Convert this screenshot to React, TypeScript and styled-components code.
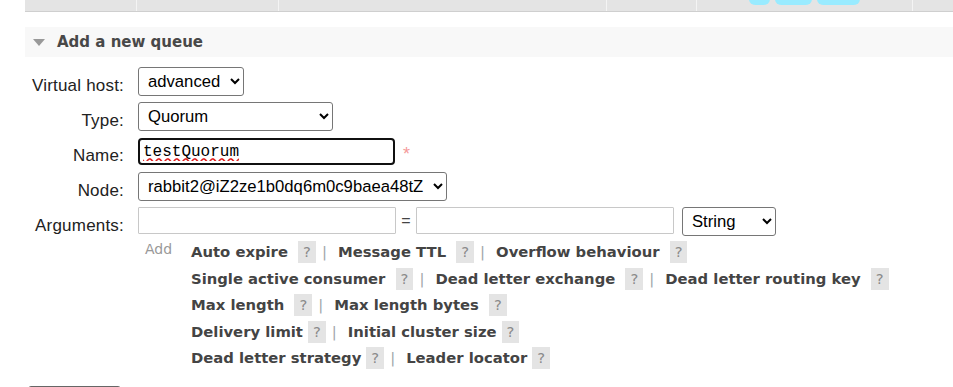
import React from 'react'
import styled, { createGlobalStyle } from 'styled-components'

const GlobalStyle = createGlobalStyle`
  html, body {
    margin: 0;
    padding: 0;
    background: #fff;
    overflow: hidden;
  }
  body {
    font-family: "Liberation Sans", Arial, sans-serif;
    color: #222;
  }
`

const Page = styled.div`
  width: 953px;
  height: 387px;
  overflow: hidden;
  padding-left: 25px;
  box-sizing: border-box;
`

const ListHead = styled.div`
  display: flex;
  height: 11px;
  background: #e4e4e4;
  border-bottom: 1px solid #cfcfcf;
  overflow: hidden;
`

const HeadCell = styled.div<{ $w: number }>`
  flex: 0 0 ${p => p.$w}px;
  box-sizing: border-box;
  border-right: 1px solid #f4f4f4;
  display: flex;
  justify-content: center;
  gap: 5px;
`

const Pill = styled.div<{ $w: number }>`
  width: ${p => p.$w}px;
  height: 20px;
  margin-top: -15px;
  border-radius: 6px;
  background: #99ebff;
`

const SectionHead = styled.div`
  margin-top: 15px;
  height: 30px;
  background: #f8f8f8;
  display: flex;
  align-items: center;
  padding-left: 8px;
  gap: 12px;
  font-family: "DejaVu Sans", Verdana, sans-serif;
  font-weight: bold;
  font-size: 15px;
  color: #484848;
`

const Arrow = styled.span`
  width: 0;
  height: 0;
  border-left: 6px solid transparent;
  border-right: 6px solid transparent;
  border-top: 7px solid #999;
`

const Form = styled.div`
  margin-top: 10px;
  display: grid;
  grid-template-columns: 99px auto;
  grid-template-rows: repeat(5, 29px) auto;
  column-gap: 14px;
  row-gap: 6px;
`

const Label = styled.label`
  text-align: right;
  white-space: nowrap;
  font-size: 17px;
  letter-spacing: 0.2px;
  line-height: 20px;
  padding-top: 9px;
  color: #222;
`

const Field = styled.div`
  display: flex;
  align-items: flex-start;
`

const Select = styled.select<{ $w?: number }>`
  ${p => (p.$w ? `width: ${p.$w}px;` : '')}
  height: 29px;
  font-family: "Liberation Sans", Arial, sans-serif;
  font-size: 16.67px;
  color: #000;
  background: #fff;
  border: 1px solid #767676;
  border-radius: 3px;
  padding: 0 6px 0 5px;
`

const NameInput = styled.input`
  width: 257px;
  height: 27px;
  box-sizing: border-box;
  margin-top: 1px;
  border: 2px solid #101010;
  border-radius: 4px;
  padding: 0 3px;
  font-family: "Liberation Mono", "Courier New", monospace;
  font-size: 16px;
  color: #000;
  outline: none;
  text-decoration: underline wavy #e02020;
  text-decoration-skip-ink: none;
  text-underline-offset: 2px;
`

const Required = styled.span`
  margin-left: 8px;
  margin-top: 7px;
  color: #f59a9a;
  font-size: 18px;
`

const ArgInput = styled.input`
  width: 258px;
  height: 27px;
  box-sizing: border-box;
  border: 1px solid #c8c8c8;
  border-radius: 1px;
  padding: 0 3px;
  font-size: 16px;
`

const Equals = styled.span`
  width: 20px;
  text-align: center;
  line-height: 27px;
  font-size: 16px;
  color: #444;
`

const Spacer = styled.span`
  width: 8px;
`

const AddRow = styled.div`
  grid-column: 2;
  display: flex;
  margin-top: -3px;
`

const AddText = styled.span`
  width: 46px;
  padding-left: 7px;
  font-family: "DejaVu Sans", Verdana, sans-serif;
  font-size: 14px;
  line-height: 20px;
  color: #999;
`

const Links = styled.div`
  font-family: "DejaVu Sans", Verdana, sans-serif;
  font-size: 14.8px;
  font-weight: bold;
  color: #444;
  line-height: 26.5px;
`

const LinkLine = styled.div`
  white-space: nowrap;
`

const Help = styled.span`
  display: inline-block;
  margin-left: 5px;
  padding: 0 5px;
  line-height: 22px;
  background: #e4e4e4;
  color: #8a8a8a;
  font-weight: normal;
`

const Sep = styled.span`
  display: inline-block;
  padding: 0 11px 0 6px;
  font-weight: normal;
  color: #a0a4aa;
`

const Button = styled.div`
  margin-top: 14px;
  margin-left: 3px;
  width: 93px;
  height: 30px;
  box-sizing: border-box;
  border: 1px solid #666;
  border-radius: 3px;
  background: #f0f0f0;
`

type Arg = { label: string; spaced?: boolean }

const argRows: Arg[][] = [
  [
    { label: 'Auto expire', spaced: true },
    { label: 'Message TTL', spaced: true },
    { label: 'Overflow behaviour', spaced: true },
  ],
  [
    { label: 'Single active consumer', spaced: true },
    { label: 'Dead letter exchange', spaced: true },
    { label: 'Dead letter routing key', spaced: true },
  ],
  [
    { label: 'Max length', spaced: true },
    { label: 'Max length bytes', spaced: true },
  ],
  [{ label: 'Delivery limit' }, { label: 'Initial cluster size' }],
  [{ label: 'Dead letter strategy' }, { label: 'Leader locator' }],
]

export default function App() {
  return (
    <Page>
      <GlobalStyle />
      <ListHead>
        <HeadCell $w={112} />
        <HeadCell $w={142} />
        <HeadCell $w={328} />
        <HeadCell $w={90} />
        <HeadCell $w={216}>
          <Pill $w={21} />
          <Pill $w={37} />
          <Pill $w={43} />
        </HeadCell>
        <HeadCell $w={60} />
      </ListHead>

      <SectionHead>
        <Arrow />
        Add a new queue
      </SectionHead>

      <Form>
        <Label>Virtual host:</Label>
        <Field>
          <Select defaultValue="advanced">
            <option>advanced</option>
          </Select>
        </Field>

        <Label>Type:</Label>
        <Field>
          <Select $w={195} defaultValue="Quorum">
            <option>Quorum</option>
            <option>Classic</option>
            <option>Stream</option>
          </Select>
        </Field>

        <Label>Name:</Label>
        <Field>
          <NameInput defaultValue="testQuorum" />
          <Required>*</Required>
        </Field>

        <Label>Node:</Label>
        <Field>
          <Select defaultValue="rabbit2@iZ2ze1b0dq6m0c9baea48tZ">
            <option>rabbit2@iZ2ze1b0dq6m0c9baea48tZ</option>
          </Select>
        </Field>

        <Label>Arguments:</Label>
        <Field>
          <ArgInput />
          <Equals>=</Equals>
          <ArgInput />
          <Spacer />
          <Select $w={94} defaultValue="String">
            <option>String</option>
            <option>Number</option>
            <option>Boolean</option>
            <option>List</option>
          </Select>
        </Field>

        <AddRow>
          <AddText>Add</AddText>
          <Links>
            {argRows.map((row, i) => (
              <LinkLine key={i}>
                {row.map((a, j) => (
                  <React.Fragment key={a.label}>
                    {a.label}
                    {a.spaced ? ' ' : ''}
                    <Help>?</Help>
                    {j < row.length - 1 && <Sep>|</Sep>}
                  </React.Fragment>
                ))}
              </LinkLine>
            ))}
          </Links>
        </AddRow>
      </Form>

      <Button />
    </Page>
  )
}
